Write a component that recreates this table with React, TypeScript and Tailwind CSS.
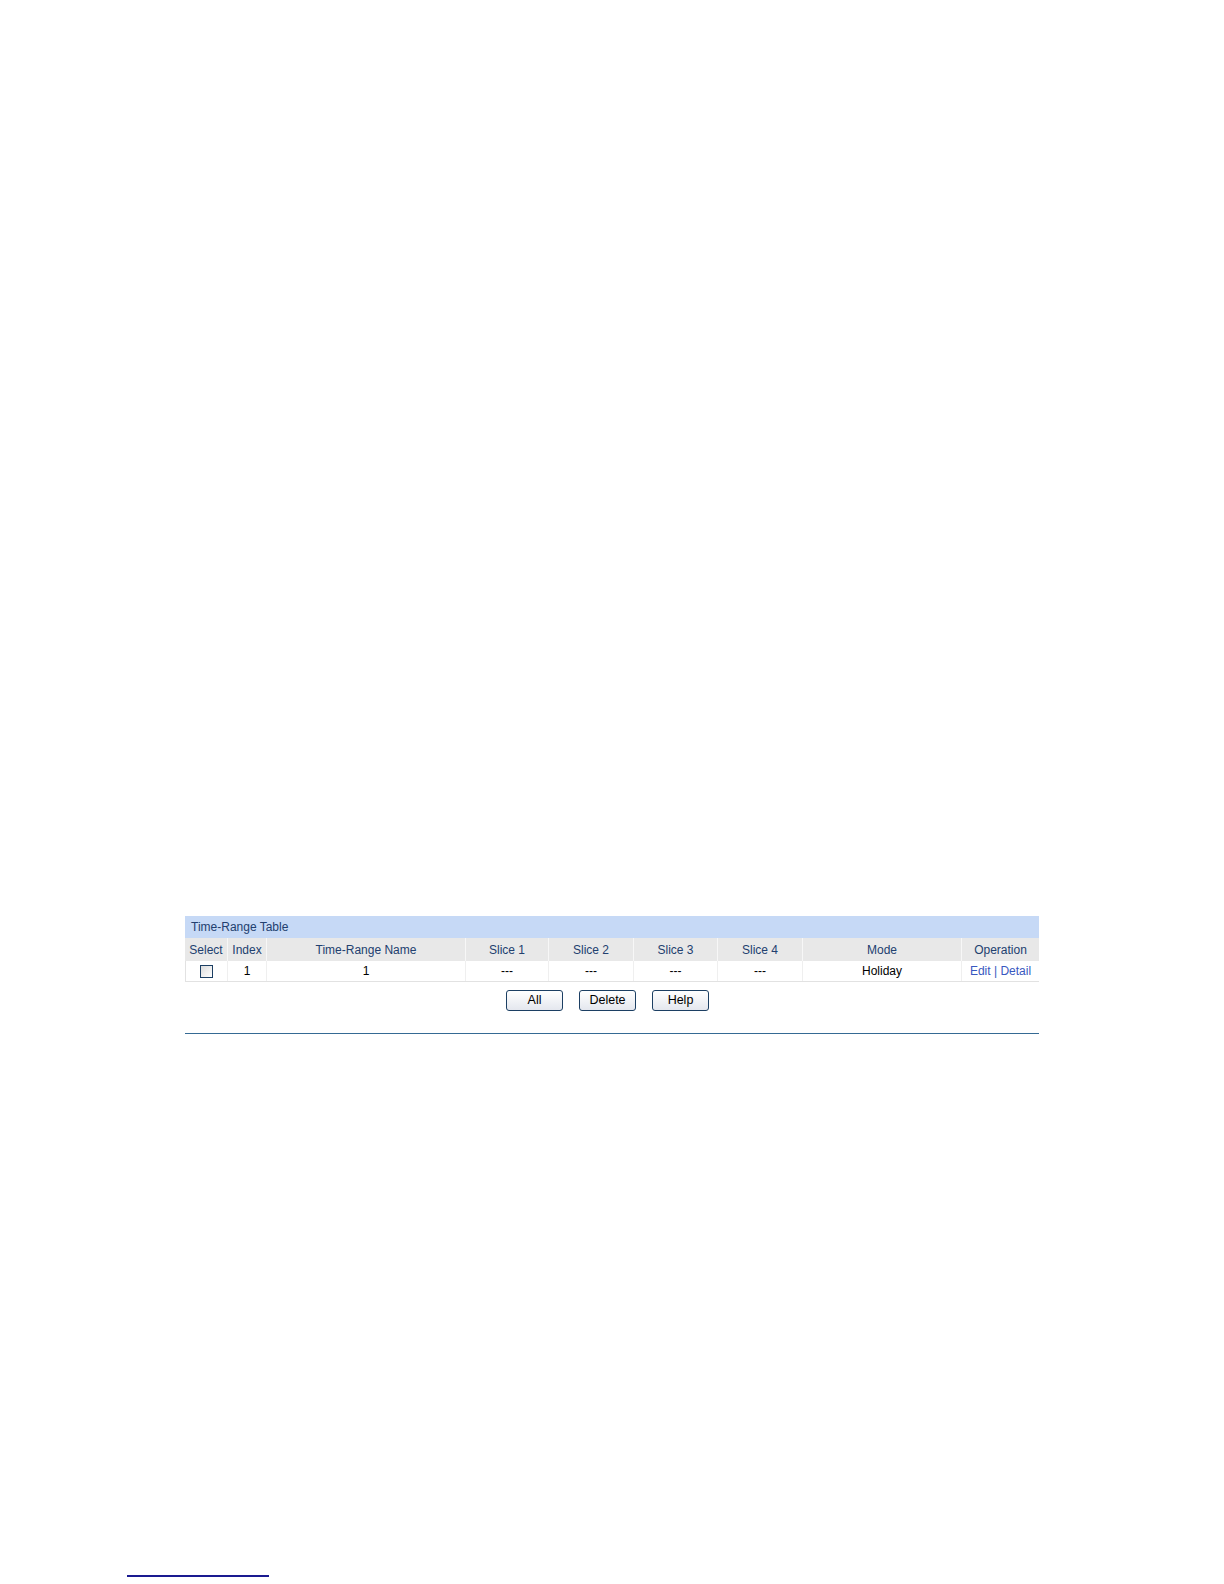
const columns = [
  { text: "Select", w: "w-[42px]" },
  { text: "Index", w: "w-[39px]" },
  { text: "Time-Range Name", w: "w-[199px]" },
  { text: "Slice 1", w: "w-[83px]" },
  { text: "Slice 2", w: "w-[85px]" },
  { text: "Slice 3", w: "w-[84px]" },
  { text: "Slice 4", w: "w-[85px]" },
  { text: "Mode", w: "w-[159px]" },
  { text: "Operation", w: "w-[78px]" },
];

function Btn({ label }: { label: string }) {
  return (
    <button className="w-[57px] h-[21px] rounded-[3px] border border-[#1c3f63] bg-gradient-to-b from-white to-[#e4e7ee] text-[12.5px] leading-none text-black">
      {label}
    </button>
  );
}

export default function App() {
  return (
    <div className="min-h-[1584px] w-full bg-white font-['Liberation_Sans',Arial,sans-serif] text-[12px]">
      <div className="pt-[916px] pl-[185px]">
        <div className="w-[854px]">
          {/* title bar */}
          <div className="h-[22px] bg-[#c6d9f6] pl-[6px] flex items-center text-[#22406f]">
            Time-Range Table
          </div>
          {/* header row */}
          <div className="flex h-[23px] bg-[#e8e8e8] text-[#22406f]">
            {columns.map((c, i) => (
              <div
                key={i}
                className={`${c.w} flex items-center justify-center ${i > 0 ? "border-l border-[#f7f7f7]" : ""}`}
              >
                {c.text}
              </div>
            ))}
          </div>
          {/* data row */}
          <div className="flex h-[21px] bg-white text-black border-b border-l border-[#e2e2e2]">
            <div className="w-[41px] flex items-center justify-center">
              <span className="w-[13px] h-[13px] border border-[#1c3f63] bg-gradient-to-br from-[#dcdcdc] to-white" />
            </div>
            <div className="w-[39px] flex items-center justify-center border-l border-[#efefef]">1</div>
            <div className="w-[199px] flex items-center justify-center border-l border-[#efefef]">1</div>
            <div className="w-[83px] flex items-center justify-center border-l border-[#efefef]">---</div>
            <div className="w-[85px] flex items-center justify-center border-l border-[#efefef]">---</div>
            <div className="w-[84px] flex items-center justify-center border-l border-[#efefef]">---</div>
            <div className="w-[85px] flex items-center justify-center border-l border-[#efefef]">---</div>
            <div className="w-[159px] flex items-center justify-center border-l border-[#efefef]">Holiday</div>
            <div className="w-[78px] flex items-center justify-center border-l border-[#efefef] text-[#3858c0]">
              Edit&nbsp;|&nbsp;Detail
            </div>
          </div>
          {/* buttons */}
          <div className="flex justify-center gap-[16px] pt-[8px] pr-[9px]">
            <Btn label="All" />
            <Btn label="Delete" />
            <Btn label="Help" />
          </div>
          <div className="mt-[22px] h-px bg-[#356a94]" />
        </div>
      </div>
      <div className="pt-[541px] pl-[127px]">
        <div className="w-[142px] h-[2px] bg-[#1a1a90]" />
      </div>
    </div>
  );
}
